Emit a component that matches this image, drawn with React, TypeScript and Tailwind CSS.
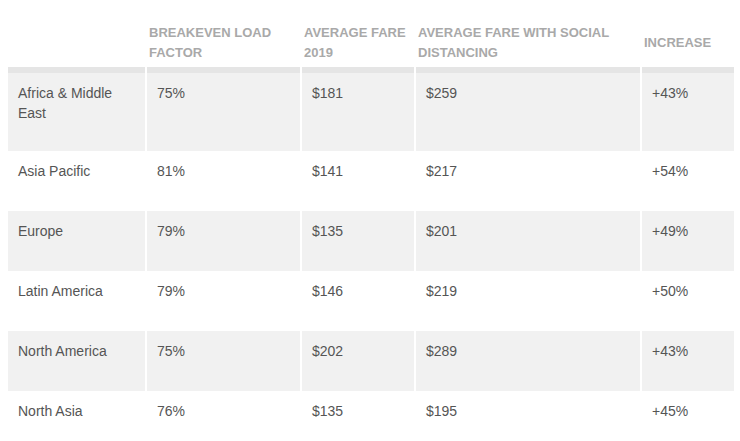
import React from "react";

const rows = [
  { region: "Africa & Middle East", be: "75%", fare: "$181", social: "$259", inc: "+43%" },
  { region: "Asia Pacific", be: "81%", fare: "$141", social: "$217", inc: "+54%" },
  { region: "Europe", be: "79%", fare: "$135", social: "$201", inc: "+49%" },
  { region: "Latin America", be: "79%", fare: "$146", social: "$219", inc: "+50%" },
  { region: "North America", be: "75%", fare: "$202", social: "$289", inc: "+43%" },
  { region: "North Asia", be: "76%", fare: "$135", social: "$195", inc: "+45%" },
];

export default function App() {
  return (
    <div
      className="w-[740px] h-[441px] overflow-hidden bg-white"
      style={{ fontFamily: '"Liberation Sans", Arial, sans-serif' }}
    >
      <div className="ml-[8px] grid grid-cols-[137px_153px_112px_224px_92px] gap-x-[2px]">
        {["", "BREAKEVEN LOAD FACTOR", "AVERAGE FARE 2019", "AVERAGE FARE WITH SOCIAL DISTANCING", "INCREASE"].map(
          (h, i) => (
            <div
              key={i}
              className="h-[67px] pt-[23px] pb-[4px] pl-[2px] pr-[4px] flex items-center text-[13px] leading-[20px] font-bold text-[#a9a9a9]"
            >
              {i === 2 ? (
                <span>
                  AVERAGE FARE
                  <br />
                  2019
                </span>
              ) : i === 3 ? (
                <span>
                  AVERAGE FARE WITH SOCIAL
                  <br />
                  DISTANCING
                </span>
              ) : i === 1 ? (
                <span>
                  BREAKEVEN LOAD
                  <br />
                  FACTOR
                </span>
              ) : (
                <span>{h}</span>
              )}
            </div>
          )
        )}
        {rows.map((r, ri) => {
          const shaded = ri % 2 === 0;
          const first = ri === 0;
          const cells = [r.region, r.be, r.fare, r.social, r.inc];
          return cells.map((c, ci) => (
            <div
              key={`${ri}-${ci}`}
              className={`${shaded ? "bg-[#f1f1f1]" : "bg-white"} ${
                first ? "border-t-[6px] border-[#e5e5e5] h-[84px] pr-[20px]" : "h-[60px]"
              } pt-[10px] pl-[10px] text-[14px] leading-[20px] text-[#555555]`}
            >
              {c}
            </div>
          ));
        })}
      </div>
    </div>
  );
}
